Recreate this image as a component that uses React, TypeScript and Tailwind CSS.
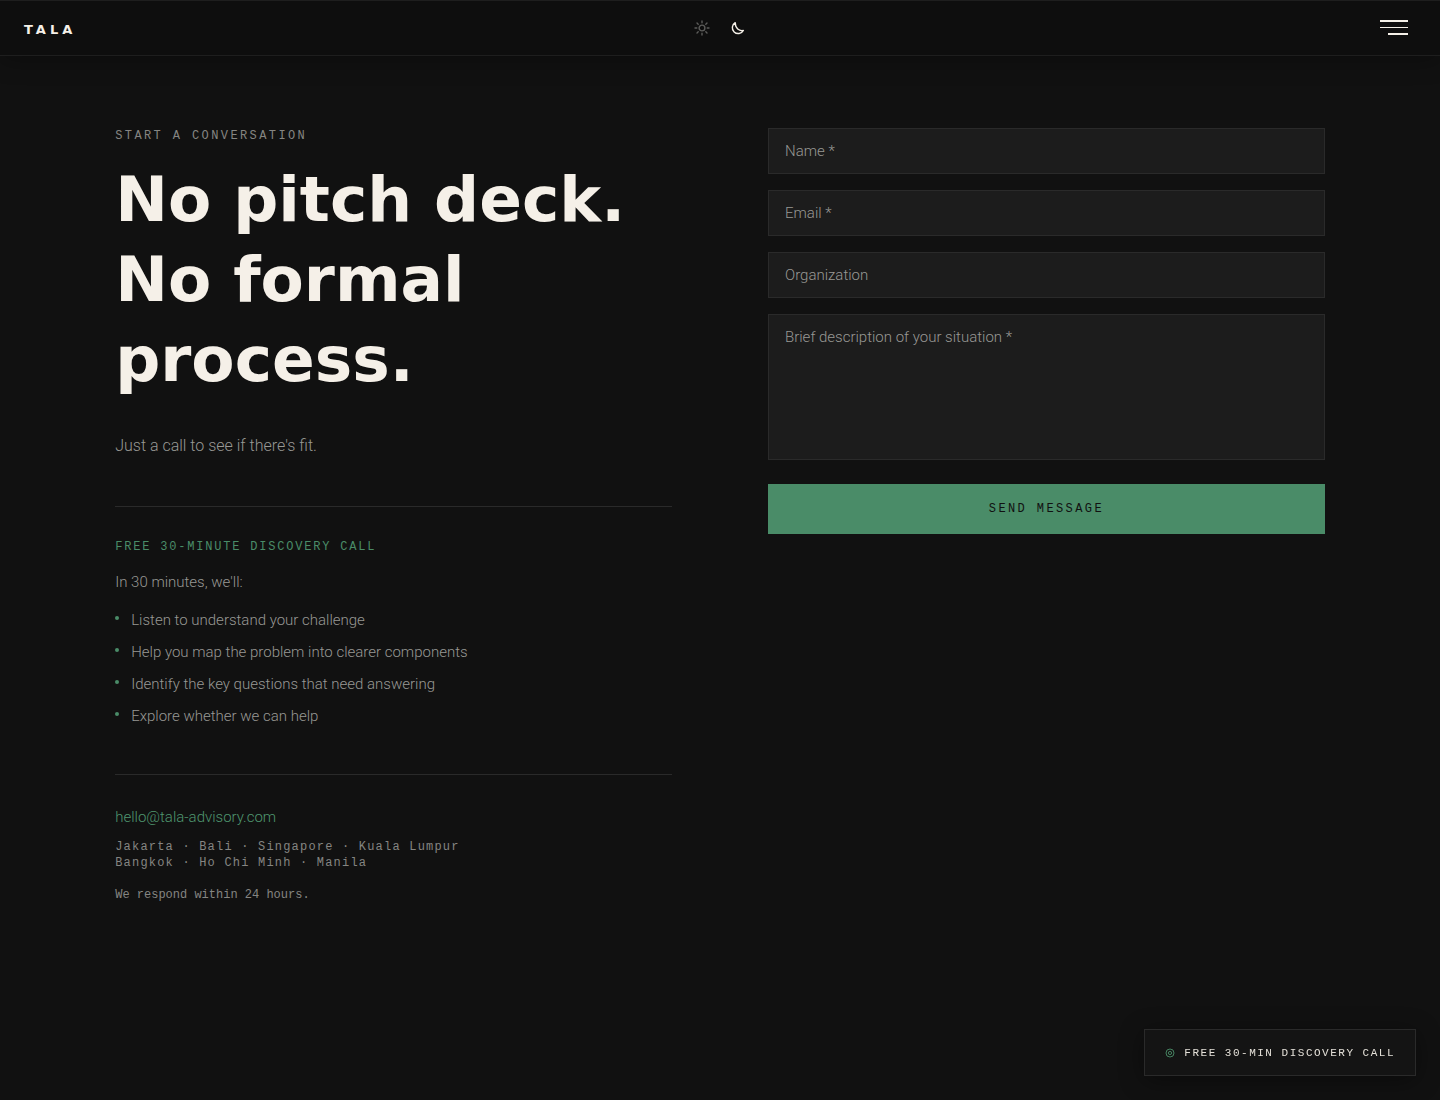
import { useState } from 'react'

const points = [
  'Listen to understand your challenge',
  'Help you map the problem into clearer components',
  'Identify the key questions that need answering',
  'Explore whether we can help',
]

const fieldClass =
  "block w-full border border-[#2a2a2a] bg-[#1c1c1c] px-4 font-['Roboto',sans-serif] text-[15px] leading-6 font-light text-[#f5f0e8] outline-none placeholder:text-[#989894] focus:border-[#4a8c68]"

const monoClass = "font-['Liberation_Mono',monospace]"

const SunIcon = () => (
  <svg viewBox="0 0 16 16" className="size-4" fill="none" stroke="currentColor" strokeWidth="1.4" strokeLinecap="round">
    <circle cx="8" cy="8" r="2.9" />
    <path d="M8 1v1.8M8 13.2v1.8M1 8h1.8M13.2 8h1.8M3 3l1.2 1.2M11.8 11.8l1.2 1.2M3 13l1.2-1.2M11.8 4.2l1.2-1.2" />
  </svg>
)

const MoonIcon = () => (
  <svg viewBox="0 0 16 16" className="size-4" fill="none" stroke="currentColor" strokeWidth="1.4" strokeLinejoin="round">
    <path d="M5.2 2.6A5.9 5.9 0 1 0 13.4 10.5C9.2 11.4 5.2 8.4 5.2 2.6Z" />
  </svg>
)

const MenuIcon = () => (
  <svg viewBox="0 0 28 16" className="h-4 w-7" fill="currentColor" shapeRendering="crispEdges">
    <path d="M0 0h28v2H0zM0 7h28v1H0zM8 13h20v2H8z" />
  </svg>
)

const TargetIcon = () => (
  <svg viewBox="0 0 11 11" className="size-[11px] text-[#4a8c68]" fill="none" stroke="currentColor" strokeWidth="0.9">
    <circle cx="5" cy="6" r="4" />
    <circle cx="5" cy="6" r="1.6" />
  </svg>
)

const Header = () => {
  const [theme, setTheme] = useState('dark')

  return (
    <header className="grid h-14 grid-cols-3 items-center border-y border-[#1e1e1e] bg-[#0e0e0e] px-6 shadow-[0_4px_24px_rgba(0,0,0,0.3)]">
      <a href="#" className="justify-self-start pt-1 font-['DejaVu_Sans',sans-serif] text-[13px] leading-4 font-bold tracking-[4px] text-[#f5f0e8]">
        TALA
      </a>
      <div className="flex gap-5 justify-self-center">
        <button
          type="button"
          aria-label="Light theme"
          onClick={() => setTheme('light')}
          className={theme === 'light' ? 'text-[#f5f0e8]' : 'text-[#5c5c5a]'}
        >
          <SunIcon />
        </button>
        <button
          type="button"
          aria-label="Dark theme"
          onClick={() => setTheme('dark')}
          className={theme === 'dark' ? 'text-[#f5f0e8]' : 'text-[#5c5c5a]'}
        >
          <MoonIcon />
        </button>
      </div>
      <button type="button" aria-label="Open menu" className="mr-2 justify-self-end text-[#f5f0e8]">
        <MenuIcon />
      </button>
    </header>
  )
}

const Intro = () => (
  <section>
    <p className={`${monoClass} text-[12px] leading-4 tracking-[2.4px] text-[#858582] uppercase`}>Start a conversation</p>
    <h1 className="mt-4 font-['DejaVu_Sans',sans-serif] text-[63px] leading-[80px] font-bold text-[#f5f0e8]">
      No pitch deck.
      <br />
      No formal
      <br />
      process.
    </h1>
    <p className="mt-8 text-[16px] leading-7">Just a call to see if there's fit.</p>

    <div className="mt-[46px] border-t border-[#2a2a2a] pt-8">
      <h2 className={`${monoClass} text-[12px] leading-4 tracking-[1.8px] text-[#4a8c68] uppercase`}>
        Free 30-minute discovery call
      </h2>
      <p className="mt-4 text-[15px] leading-[22px]">In 30 minutes, we'll:</p>
      <ul className="mt-[15px] space-y-2 text-[15px] leading-6">
        {points.map((point) => (
          <li key={point} className="flex items-start gap-3">
            <span className="mt-2 size-1 shrink-0 rounded-full bg-[#4a8c68]" />
            {point}
          </li>
        ))}
      </ul>
    </div>

    <div className="mt-[46px] border-t border-[#2a2a2a] pt-8">
      <a href="mailto:hello@tala-advisory.com" className="block text-[15px] leading-5 text-[#4f966f]">
        hello@tala-advisory.com
      </a>
      <p className={`${monoClass} mt-3 text-[12px] leading-4 tracking-[1.2px] text-[#858582]`}>
        Jakarta · Bali · Singapore · Kuala Lumpur
        <br />
        Bangkok · Ho Chi Minh · Manila
      </p>
      <p className={`${monoClass} mt-4 text-[12px] leading-4 text-[#858582]`}>We respond within 24 hours.</p>
    </div>
  </section>
)

const ContactForm = () => (
  <form className="flex flex-col gap-4" onSubmit={(e) => e.preventDefault()}>
    <input type="text" aria-label="Name" placeholder="Name *" required className={`${fieldClass} h-[46px]`} />
    <input type="email" aria-label="Email" placeholder="Email *" required className={`${fieldClass} h-[46px]`} />
    <input type="text" aria-label="Organization" placeholder="Organization" className={`${fieldClass} h-[46px]`} />
    <textarea
      aria-label="Brief description of your situation"
      placeholder="Brief description of your situation *"
      required
      className={`${fieldClass} h-[146px] resize-none py-[10px]`}
    />
    <button
      type="submit"
      className={`${monoClass} mt-2 h-[50px] bg-[#4a8c68] text-[12px] leading-4 tracking-[2.4px] text-[#111111] uppercase`}
    >
      Send message
    </button>
  </form>
)

export default function App() {
  return (
    <div className="min-h-screen bg-[#111111] font-['Roboto',sans-serif] font-light text-[#989894]">
      <Header />
      <main className="grid grid-cols-1 gap-24 px-[8vw] py-[72px] lg:grid-cols-2">
        <Intro />
        <ContactForm />
      </main>
      <a
        href="#discovery"
        className={`${monoClass} fixed right-6 bottom-6 flex h-[47px] items-center gap-2 border border-[#2a2a2a] bg-[#141414] px-5 text-[11px] leading-4 tracking-[1.5px] text-[#e4e0d8] uppercase shadow-[0_4px_24px_rgba(0,0,0,0.4)]`}
      >
        <TargetIcon />
        Free 30-min discovery call
      </a>
    </div>
  )
}
